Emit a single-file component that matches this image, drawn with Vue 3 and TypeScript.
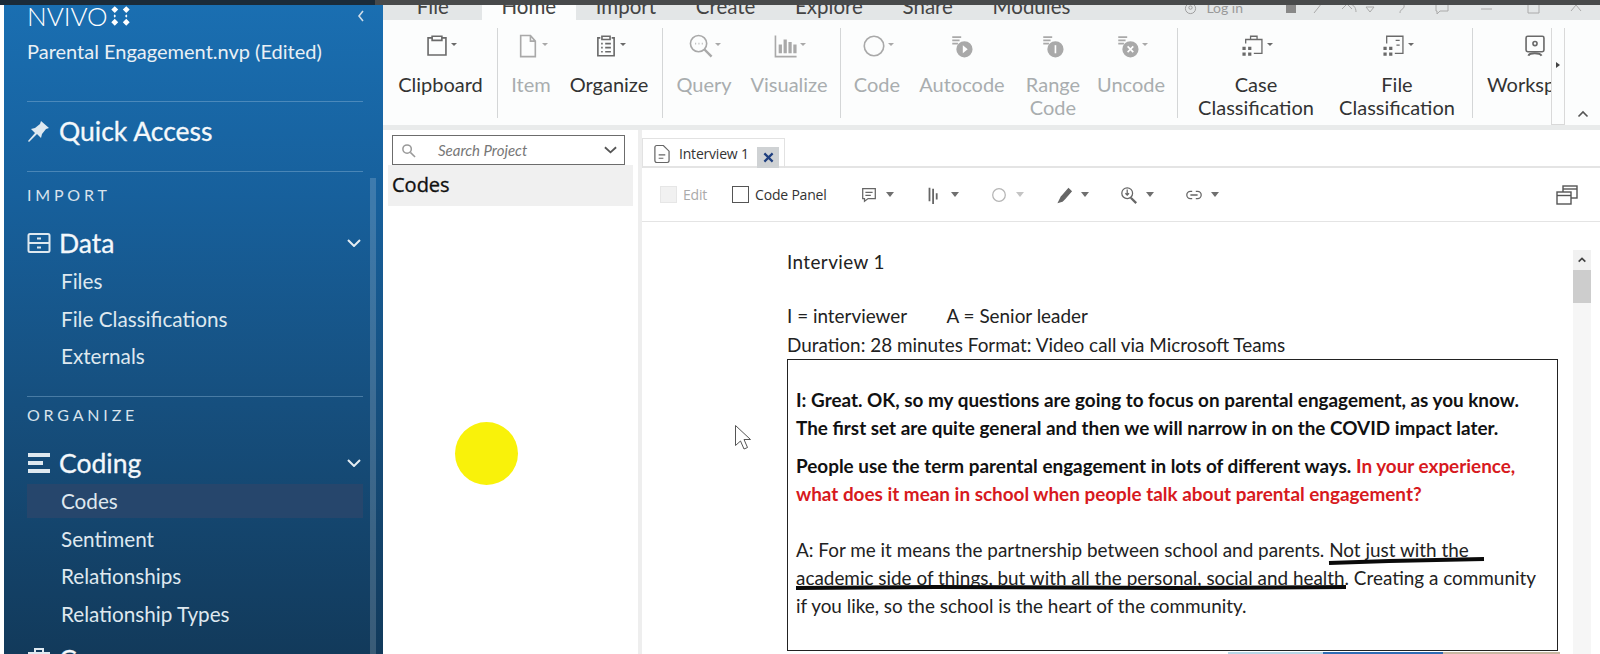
<template>
  <div class="app">
    <aside class="sidebar">
      <div class="logo-row">
        <span class="logo-text">NVIVO</span>
        <svg class="logo-dots" viewBox="0 0 20 20">
          <path d="M5 1l3 3-3 3-3-3zM15 1l3 3-3 3-3-3zM5 12l3 3-3 3-3-3zM15 12l3 3-3 3-3-3zM5 8l1 1.500-1 1.500-1-1.500zM15 8l1 1.500-1 1.500-1-1.500z" />
        </svg>
        <svg class="collapse" viewBox="0 0 10 14"><path d="M7 2L3 7l4 5" /></svg>
      </div>
      <div class="project">Parental Engagement.nvp (Edited)</div>
      <hr class="rule rule--first" />
      <div class="quick">
        <svg class="side-icon" viewBox="0 0 24 24"><path d="M14 2l8 7-3 1-4 5-1 4-4-4-8 8-1-1 7-8-4-4 4-1 5-4z" /></svg>
        <span>Quick Access</span>
      </div>
      <hr class="rule" />
      <div class="section-label">IMPORT</div>
      <div class="group-head">
        <svg class="side-icon side-icon--line" viewBox="0 0 24 24"><rect x="1.500" y="3" width="21" height="18" rx="1.500" /><path d="M1.500 12h21M10 7.500h4M10 16.500h4" /></svg>
        <span>Data</span>
        <svg class="chev" viewBox="0 0 14 8"><path d="M1 1l6 6 6-6" /></svg>
      </div>
      <div v-for="item in dataItems" :key="item" class="sub-item">{{ item }}</div>
      <hr class="rule rule--second" />
      <div class="section-label section-label--organize">ORGANIZE</div>
      <div class="group-head group-head--coding">
        <svg class="side-icon" viewBox="0 0 24 24"><path d="M1 2h22v4H1zM1 10h15v4H1zM1 18h22v4H1z" /></svg>
        <span>Coding</span>
        <svg class="chev" viewBox="0 0 14 8"><path d="M1 1l6 6 6-6" /></svg>
      </div>
      <div
        v-for="item in codingItems"
        :key="item"
        class="sub-item"
        :class="{ 'sub-item--active': item === 'Codes' }"
      >
        {{ item }}
      </div>
      <div class="group-head group-head--cases">
        <svg class="side-icon side-icon--line" viewBox="0 0 24 24"><rect x="2" y="6" width="20" height="16" /><path d="M8 6V2h8v4" /></svg>
        <span>Cases</span>
      </div>
      <div class="side-scroll" />
    </aside>

    <main class="workspace">
      <div class="tabs">
        <span v-for="t in tabs" :key="t" class="tab" :class="{ 'tab--active': t === 'Home', 'tab--first': t === 'File' }">{{ t }}</span>
        <div class="title-tools">
          <svg class="title-user" viewBox="0 0 14 14"><circle cx="7" cy="7" r="5.500" /><circle cx="7" cy="6" r="1.800" /></svg>
          <span>Log in</span>
          <svg class="title-icons" viewBox="0 0 320 14">
            <path d="M20 2h10v10H20z" fill="#888" stroke="none" />
            <path d="M48 12l8-10M76 8l5-5 5 5M82 3c5 0 8 3 8 8M100 6l4 5 4-5z" />
            <path d="M132 3c3-2 7 0 6 3s-4 2-4 6M170 2h12v8h-8l-3 3v-3h-1zM215 8h11M262 2h11v10h-11zM305 10l5-6 5 6" />
          </svg>
        </div>
      </div>

      <div class="ribbon">
        <div
          v-for="(group, gi) in ribbon"
          :key="gi"
          class="rib-group"
          :style="{ width: group.width + 'px', paddingLeft: (group.pad ?? 0) + 'px' }"
        >
          <div
            v-for="b in group.items"
            :key="b.label"
            class="rib-btn"
            :class="{ 'rib-btn--off': b.off }"
            :style="{ width: b.width + 'px' }"
          >
            <div class="rib-icon">
              <svg viewBox="0 0 32 32" v-html="icons[b.icon]" />
              <i v-if="b.caret !== false" class="caret caret--small" />
            </div>
            <div class="rib-label">{{ b.label }}</div>
          </div>
        </div>
        <div class="rib-more"><i class="more-arrow" /></div>
        <div class="rib-end">
          <svg viewBox="0 0 12 8"><path d="M1.500 6.500L6 2l4.500 4.500" /></svg>
        </div>
      </div>

      <div class="lower">
        <section class="project-pane">
          <div class="search">
            <svg class="search-icon" viewBox="0 0 16 16"><circle cx="6.500" cy="6.500" r="4.500" /><path d="M10 10l5 5" /></svg>
            <span class="search-text">Search Project</span>
            <svg class="search-chev" viewBox="0 0 14 8"><path d="M1 1l6 5.500L13 1" /></svg>
          </div>
          <div class="pane-title">Codes</div>
        </section>

        <section class="doc-pane">
          <div class="doc-tabs">
            <div class="doc-tab">
              <svg class="doc-tab-icon" viewBox="0 0 18 20"><path d="M2 3a2 2 0 012-2h7l6 6v10a2 2 0 01-2 2H4a2 2 0 01-2-2z" /><path d="M6 11h7M6 14.500h5" /></svg>
              <span>Interview 1</span>
              <span class="doc-close">
                <svg viewBox="0 0 12 12"><path d="M1.500 1.500l9 9M10.500 1.500l-9 9" /></svg>
              </span>
            </div>
          </div>

          <div class="doc-toolbar">
            <span class="check check--off" />
            <span class="tool-text tool-text--off">Edit</span>
            <span class="check" />
            <span class="tool-text">Code Panel</span>
            <div class="tool-icons">
              <div v-for="t in toolIcons" :key="t.name" class="tool-btn" :class="{ 'tool-btn--off': t.off }">
                <svg viewBox="0 0 20 20" v-html="t.svg" />
                <i class="caret" />
              </div>
            </div>
            <svg class="window-icon" viewBox="0 0 22 20">
              <rect x="7" y="1" width="14" height="12" />
              <path d="M7 4h14" />
              <rect x="1" y="7" width="14" height="12" fill="#fff" />
              <path d="M1 10.500h14" />
            </svg>
          </div>

          <div class="doc-body">
            <div class="page">
              <p class="doc-title">Interview 1</p>
              <p class="meta meta--first">I = interviewer <span class="meta-gap" />A = Senior leader</p>
              <p class="meta">Duration: 28 minutes Format: Video call via Microsoft Teams</p>
              <div class="transcript">
                <p class="para bold">
                  I: Great. OK, so my questions are going to focus on parental engagement, as you know.<br />
                  The first set are quite general and then we will narrow in on the COVID impact later.
                </p>
                <p class="para para--tight bold">
                  People use the term parental engagement in lots of different ways.
                  <span class="red">In your experience,<br />what does it mean in school when people talk about parental engagement?</span>
                </p>
                <p class="para para--answer">
                  A: For me it means the partnership between school and parents. Not just with the<br />
                  academic side of things, but with all the personal, social and health. Creating a community<br />
                  if you like, so the school is the heart of the community.
                </p>
              </div>
            </div>
            <div class="doc-scroll">
              <div class="doc-scroll-up">
                <svg viewBox="0 0 12 8"><path d="M2 6l4-4 4 4" /></svg>
              </div>
              <div class="doc-scroll-thumb" />
            </div>
          </div>
        </section>
      </div>
    </main>

    <div class="top-strip" />
    <div class="highlight-dot" />
    <svg class="pointer" viewBox="0 0 18 28">
      <path d="M1.500 1.500v20l5-4.500 3.500 8 3.500-1.500-3.500-8h6.500z" />
    </svg>
    <svg class="ink" viewBox="0 0 1600 654">
      <path d="M1329 563l60-2 95-2" />
      <path d="M796 588l140-1 240 1 170-1" />
    </svg>
    <div class="bottom-bits">
      <span class="bit bit--a" /><span class="bit bit--b" /><span class="bit bit--c" />
    </div>
  </div>
</template>

<script setup lang="ts">
interface RibbonBtn {
  label: string
  width: number
  icon: string
  off?: boolean
  caret?: boolean
}

interface RibbonGroup {
  width: number
  pad?: number
  items: RibbonBtn[]
}

const dataItems = ['Files', 'File Classifications', 'Externals']
const codingItems = ['Codes', 'Sentiment', 'Relationships', 'Relationship Types']
const tabs = ['File', 'Home', 'Import', 'Create', 'Explore', 'Share', 'Modules']

const icons: Record<string, string> = {
  clipboard: '<path d="M9 6H5v21h22V6h-4M10 4h12v5H10z"/>',
  item: '<path d="M7 3h12l6 7v19H7zM19 3v7h6"/>',
  organize: '<path d="M9 6H6v22h20V6h-3M11 4h10v4H11zM10 13h2M15 13h7M10 18h2M15 18h7M10 23h2M15 23h7"/>',
  query: '<circle cx="13" cy="13" r="10"/><path d="M20 20l9 9" stroke-width="3"/><path d="M9 13h1M13 13h1M17 13h1"/>',
  visualize: '<path d="M3 3v26h26"/><path d="M9 14v11M15 8v17M21 11v14M27 14v11" stroke-width="4"/>',
  code: '<circle cx="16" cy="16" r="12"/>',
  autocode: '<path d="M4 5h11M4 9h9M4 13h7"/><circle cx="19" cy="20" r="9" fill="currentColor"/><path d="M17 15l6 5-6 5z" fill="#fff" stroke="none"/>',
  range: '<path d="M4 5h11M4 9h9M4 13h7"/><circle cx="19" cy="20" r="9" fill="currentColor"/><path d="M19 15v10" stroke="#fff" stroke-width="2"/>',
  uncode: '<path d="M4 5h11M4 9h9M4 13h7"/><circle cx="19" cy="20" r="9" fill="currentColor"/><path d="M15.500 16.500l7 7M22.500 16.500l-7 7" stroke="#fff" stroke-width="2"/>',
  caseClass: '<path d="M7 13V8h20v17H17M13 8V4h8v4" stroke-width="1.600"/><path d="M3 17h4v4H3zM10 17h4v4h-4zM3 24h4v4H3zM10 24h4v4h-4z" fill="currentColor" stroke="none"/>',
  fileClass: '<path d="M7 13V4h20v21H17M18 9h5M19 15h4" stroke-width="1.600"/><path d="M3 17h4v4H3zM10 17h4v4h-4zM3 24h4v4H3zM10 24h4v4h-4z" fill="currentColor" stroke="none"/>',
  workspace: '<rect x="5" y="4" width="22" height="19" rx="2"/><circle cx="16" cy="13" r="2.500"/><path d="M8 28c1-4 14-4 16 0" stroke-width="2.500"/>',
}

const ribbon: RibbonGroup[] = [
  { width: 113, items: [{ label: 'Clipboard', width: 111, icon: 'clipboard' }] },
  {
    width: 165,
    items: [
      { label: 'Item', width: 66, icon: 'item', off: true },
      { label: 'Organize', width: 90, icon: 'organize' },
    ],
  },
  {
    width: 178,
    items: [
      { label: 'Query', width: 82, icon: 'query', off: true },
      { label: 'Visualize', width: 88, icon: 'visualize', off: true },
    ],
  },
  {
    width: 337,
    items: [
      { label: 'Code', width: 72, icon: 'code', off: true },
      { label: 'Autocode', width: 98, icon: 'autocode', off: true, caret: false },
      { label: 'Range Code', width: 84, icon: 'range', off: true, caret: false },
      { label: 'Uncode', width: 72, icon: 'uncode', off: true },
    ],
  },
  {
    width: 295,
    items: [
      { label: 'Case Classification', width: 156, icon: 'caseClass' },
      { label: 'File Classification', width: 126, icon: 'fileClass' },
    ],
  },
  {
    width: 78,
    pad: 14,
    items: [{ label: 'Workspace', width: 96, icon: 'workspace', caret: false }],
  },
]

const toolIcons = [
  { name: 'memo', svg: '<path d="M3 3h14v11H9l-4 3v-3H3zM6 7h8M6 10.500h6"/>' },
  { name: 'stripes', svg: '<path d="M5 2v15M9 3v17M13 8v7" stroke-width="2"/>' },
  { name: 'circle', off: true, svg: '<circle cx="10" cy="10" r="7"/>' },
  { name: 'pen', svg: '<path d="M8 11l7-8 3 3-7 8zM7 12l3 3-2 2-4 1z" fill="currentColor"/>' },
  { name: 'find', svg: '<circle cx="8" cy="8" r="6"/><path d="M12 13l6 6" stroke-width="2.500"/><path d="M8 4v6M6 8l2 2 2-2"/>' },
  { name: 'link', svg: '<path d="M8 6H6a4 4 0 000 8h2M12 6h2a4 4 0 010 8h-2M6 10h8"/>' },
]
</script>

<style>
html,
body {
  margin: 0;
  overflow: hidden;
  background: #fff;
}
</style>

<style scoped>
.app {
  position: relative;
  width: 1600px;
  height: 654px;
  overflow: hidden;
  display: flex;
  font-family: Lato, "Liberation Sans", sans-serif;
  color: #333;
}

.sidebar {
  position: relative;
  flex: 0 0 379px;
  height: 654px;
  box-sizing: border-box;
  margin-left: 4px;
  padding: 0 20px 0 23px;
  background: linear-gradient(180deg, #1a6fb2 0%, #17609c 30%, #164f7e 62%, #123a5b 100%);
  color: #e9f0f5;
  overflow: hidden;
}

.logo-row {
  display: flex;
  align-items: center;
  height: 32px;
}

.logo-text {
  font-size: 26px;
  font-weight: 300;
  color: #fff;
}

.logo-dots {
  width: 23px;
  height: 23px;
  margin-left: 1px;
  fill: #fff;
}

.collapse {
  width: 10px;
  height: 14px;
  margin-left: auto;
  margin-right: -3px;
  fill: none;
  stroke: #cfdde8;
  stroke-width: 1.6;
}

.project {
  height: 30px;
  line-height: 38px;
  font-size: 20px;
  white-space: nowrap;
}

.rule {
  margin: 0;
  border: 0;
  border-top: 1px solid rgba(150, 190, 220, 0.4);
}

.rule--first {
  margin-top: 39px;
}

.rule--second {
  margin-top: 23px;
}

.quick {
  display: flex;
  align-items: center;
  gap: 8px;
  height: 58px;
  margin-bottom: 11px;
  font-size: 26.5px;
  color: #f4f8fb;
  -webkit-text-stroke: 0.3px #f4f8fb;
}

.side-icon {
  flex: 0 0 24px;
  width: 24px;
  height: 24px;
  fill: #dfe9f0;
}

.side-icon--line {
  fill: none;
  stroke: #dfe9f0;
  stroke-width: 2;
}

.section-label {
  height: 47px;
  line-height: 45px;
  font-size: 16px;
  letter-spacing: 3.8px;
  color: #d8e3ec;
}

.section-label--organize {
  height: 36px;
  line-height: 36px;
}

.group-head {
  display: flex;
  align-items: center;
  gap: 8px;
  height: 38px;
  margin-top: 5px;
  font-size: 26.5px;
  color: #f4f8fb;
  -webkit-text-stroke: 0.3px #f4f8fb;
}

.group-head--coding {
  margin-top: 11px;
}

.group-head--cases {
  margin-top: 9px;
}

.chev {
  width: 14px;
  height: 8px;
  margin-left: auto;
  margin-right: 2px;
  fill: none;
  stroke: #e4ecf2;
  stroke-width: 2;
}

.sub-item {
  height: 34px;
  line-height: 34px;
  margin: 2px 0 3.5px;
  padding-left: 34px;
  font-size: 20.7px;
  color: #dfe8ef;
}

.sub-item--active {
  background: #26466c;
}

.side-scroll {
  position: absolute;
  top: 178px;
  right: 7px;
  bottom: 0;
  width: 6px;
  background: rgba(255, 255, 255, 0.17);
}

.workspace {
  flex: 1;
  min-width: 0;
  display: flex;
  flex-direction: column;
  background: #fff;
}

.tabs {
  display: flex;
  align-items: flex-start;
  height: 20px;
  padding-left: 14px;
  background: #e3e6e7;
  font-size: 20.5px;
  line-height: 12px;
  color: #444;
}

.tab {
  height: 20px;
  padding: 0 19.8px;
}

.tab--first {
  margin-right: 13px;
}

.tab--active {
  background: #fcfdfd;
}

.title-tools {
  display: flex;
  align-items: center;
  gap: 9px;
  margin-left: auto;
  height: 16px;
  font-size: 14px;
  color: #999;
}

.title-user {
  width: 13px;
  height: 13px;
  fill: none;
  stroke: #999;
}

.title-icons {
  width: 320px;
  height: 14px;
  margin-left: 14px;
  margin-right: 14px;
  fill: none;
  stroke: #aaa;
}

.ribbon {
  display: flex;
  height: 110px;
  box-sizing: border-box;
  padding: 8px 0 0 2px;
  background: #fcfdfd;
  border-bottom: 5px solid #e9ebeb;
  overflow: hidden;
}

.rib-group {
  flex: none;
  display: flex;
  box-sizing: border-box;
  height: 90px;
  border-right: 1px solid #d4d6d7;
  overflow: hidden;
}

.rib-group:nth-child(6) {
  border-right: 0;
}

.rib-btn {
  flex: none;
  text-align: center;
  color: #333;
}

.rib-icon {
  display: flex;
  align-items: center;
  justify-content: center;
  height: 36px;
  color: #6a6a6a;
}

.rib-icon svg {
  width: 26px;
  height: 26px;
  fill: none;
  stroke: currentColor;
  stroke-width: 2;
}

.rib-label {
  margin-top: 9px;
  font-size: 20px;
  line-height: 23px;
}

.rib-btn--off {
  color: #a9adaf;
}

.rib-btn--off .rib-icon {
  color: #a9a9a9;
}

.caret {
  display: inline-block;
  flex: none;
  margin-left: 8px;
  border-left: 4.5px solid transparent;
  border-right: 4.5px solid transparent;
  border-top: 5px solid #6f6f6f;
}

.caret--small {
  margin: 0 0 4px 1px;
  border-left-width: 3px;
  border-right-width: 3px;
  border-top: 3px solid currentColor;
}

.rib-more {
  flex: 0 0 14px;
  height: 97px;
  margin-left: 0;
  box-sizing: border-box;
  border: 1px solid #d9d9d9;
  border-top: 0;
  display: flex;
  align-items: center;
  justify-content: center;
  position: relative;
}

.more-arrow {
  margin-bottom: 22px;
  border-top: 3px solid transparent;
  border-bottom: 3px solid transparent;
  border-left: 4px solid #444;
}

.rib-end {
  flex: 1;
  display: flex;
  justify-content: center;
  align-items: flex-end;
  height: 92px;
}

.rib-end svg {
  width: 12px;
  height: 8px;
  margin-bottom: 2px;
  fill: none;
  stroke: #555;
  stroke-width: 1.6;
}

.lower {
  flex: 1;
  min-height: 0;
  display: flex;
}

.project-pane {
  flex: 0 0 259px;
  box-sizing: border-box;
  padding: 5px 5px 0;
  border-right: 4px solid #eeeeee;
}

.search {
  display: flex;
  align-items: center;
  box-sizing: border-box;
  width: 233px;
  height: 30px;
  margin-left: 4px;
  padding: 0 8px;
  border: 1px solid #6c6c6c;
}

.search-icon {
  width: 15px;
  height: 15px;
  fill: none;
  stroke: #999;
  stroke-width: 1.6;
}

.search-text {
  margin-left: 22px;
  font-size: 15px;
  font-style: italic;
  color: #777;
}

.search-chev {
  width: 13px;
  height: 8px;
  margin-left: auto;
  margin-right: -1px;
  fill: none;
  stroke: #555;
  stroke-width: 2;
}

.pane-title {
  height: 41px;
  line-height: 39px;
  padding-left: 4px;
  background: #f0f0f0;
  font-family: "Open Sans", sans-serif;
  font-size: 20px;
  color: #111;
  -webkit-text-stroke: 0.35px #111;
}

.doc-pane {
  flex: 1;
  min-width: 0;
  display: flex;
  flex-direction: column;
}

.doc-tabs {
  height: 38px;
  box-sizing: border-box;
  padding: 8px 0 0;
  border-bottom: 2px solid #e4e4e4;
}

.doc-tab {
  display: flex;
  align-items: center;
  box-sizing: border-box;
  width: 143px;
  height: 30px;
  padding: 0 5px 0 10px;
  border: 1px solid #e2e2e2;
  border-bottom: 0;
  font-family: "Open Sans", sans-serif;
  font-size: 14px;
  letter-spacing: -0.2px;
  color: #333;
}

.doc-tab-icon {
  width: 17px;
  height: 20px;
  margin-right: 9px;
  fill: none;
  stroke: #666;
  stroke-width: 1.300;
}

.doc-close {
  display: flex;
  align-items: center;
  justify-content: center;
  width: 22px;
  height: 21px;
  margin-left: auto;
  margin-top: 7px;
  background: #cfd2d4;
}

.doc-close svg {
  width: 11px;
  height: 11px;
  fill: none;
  stroke: #1f3f7f;
  stroke-width: 2.400;
}

.doc-toolbar {
  display: flex;
  align-items: center;
  height: 54px;
  box-sizing: border-box;
  padding: 0 22px 0 14px;
  border-bottom: 1px solid #e4e4e4;
}

.check {
  flex: none;
  width: 17px;
  height: 17px;
  box-sizing: border-box;
  margin-left: 25px;
  border: 1px solid #555;
}

.check--off {
  margin-left: 4px;
  border-color: #e6e6e6;
  background: #f1f1f1;
}

.tool-text {
  margin-left: 6px;
  font-family: "Open Sans", sans-serif;
  font-size: 14px;
  letter-spacing: -0.2px;
  color: #333;
}

.tool-text--off {
  color: #aaa;
}

.tool-icons {
  display: flex;
  margin-left: 33px;
  gap: 21px;
}

.tool-btn {
  display: flex;
  align-items: center;
  width: 44px;
  color: #666;
}

.tool-btn svg {
  flex: none;
  width: 18px;
  height: 18px;
  fill: none;
  stroke: currentColor;
  stroke-width: 1.400;
}

.tool-btn--off {
  color: #b5b5b5;
}

.tool-btn--off .caret {
  border-top-color: #c4c4c4;
}

.window-icon {
  width: 22px;
  height: 20px;
  margin-left: auto;
  fill: none;
  stroke: #555;
  stroke-width: 1.400;
}

.doc-body {
  flex: 1;
  min-height: 0;
  display: flex;
  overflow: hidden;
}

.page {
  flex: 1;
  min-width: 0;
  padding: 23px 15px 0 145px;
  font-size: 18.9px;
  color: #222;
}

.page p {
  margin: 0;
  white-space: nowrap;
}

.doc-title {
  line-height: 34px;
  letter-spacing: 0.4px;
}

.meta {
  line-height: 29px;
}

.meta--first {
  margin-top: 22px !important;
}

.meta-gap {
  display: inline-block;
  width: 35px;
}

.transcript {
  padding: 26px 8px 30px;
  border: 1px solid #222;
}

.para {
  line-height: 28px;
}

.para--tight {
  margin-top: 10px !important;
}

.para--answer {
  margin-top: 28px !important;
}

.bold {
  font-weight: 700;
  color: #111;
}

.red {
  color: #d71920;
}

.doc-scroll {
  flex: 0 0 18px;
  margin: 28px 9px 0 0;
  background: #f6f6f6;
}

.doc-scroll-up {
  display: flex;
  align-items: center;
  justify-content: center;
  height: 20px;
  background: #f1f1f1;
}

.doc-scroll-up svg {
  width: 10px;
  height: 8px;
  fill: none;
  stroke: #444;
  stroke-width: 2;
}

.doc-scroll-thumb {
  height: 33px;
  background: #cdcdcd;
}

.top-strip {
  position: absolute;
  top: 0;
  left: 0;
  right: 0;
  height: 5px;
  background: linear-gradient(90deg, #1b2b39 0, #1b2b39 375px, #484a4b 375px, #484a4b 100%);
}

.highlight-dot {
  position: absolute;
  left: 455px;
  top: 422px;
  width: 63px;
  height: 63px;
  border-radius: 50%;
  background: #f9f20a;
}

.pointer {
  position: absolute;
  left: 734px;
  top: 424px;
  width: 18px;
  height: 28px;
  fill: #fff;
  stroke: #555;
  stroke-width: 1;
}

.ink {
  position: absolute;
  inset: 0;
  width: 1600px;
  height: 654px;
  fill: none;
  stroke: #0a0a0a;
  stroke-width: 4;
  pointer-events: none;
}

.bottom-bits {
  position: absolute;
  left: 1228px;
  bottom: 0;
  display: flex;
  height: 2px;
}

.bit {
  height: 2px;
}

.bit--a {
  width: 95px;
  background: #b7d6e6;
}

.bit--b {
  width: 120px;
  background: #2f6cb4;
}

.bit--c {
  width: 117px;
  background: #c9b7a2;
}
</style>
